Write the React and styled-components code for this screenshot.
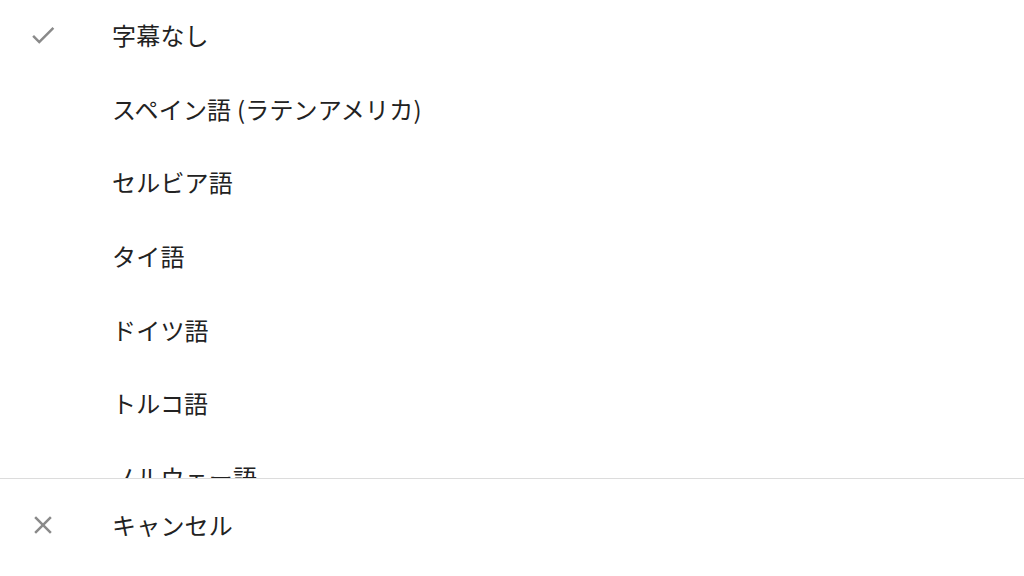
import styled, { createGlobalStyle } from "styled-components";

const Global = createGlobalStyle`
  html, body { margin: 0; padding: 0; background: #fff; }
  body {
    font-family: "Noto Sans CJK JP", "Noto Sans", sans-serif;
    color: #222;
  }
`;

const Sheet = styled.div`
  width: 1024px;
  height: 576px;
  display: flex;
  flex-direction: column;
  overflow: hidden;
`;

const List = styled.div`
  height: 478px;
  overflow: hidden;
  border-bottom: 1px solid #dcdcdc;
  flex-shrink: 0;
`;

const Row = styled.div`
  height: 73.7px;
  box-sizing: border-box;
  padding-bottom: 4px;
  display: flex;
  align-items: center;
  font-size: 24px;
  line-height: 1;
`;

const IconCell = styled.div`
  width: 112px;
  padding-left: 28px;
  box-sizing: border-box;
  display: flex;
  align-items: center;
  color: #8a8a8a;
`;

const Label = styled.span`
  white-space: nowrap;
  letter-spacing: 0.2px;
`;

const Footer = styled(Row)`
  flex: 1;
  height: auto;
  padding-bottom: 5px;
`;

const Check = () => (
  <svg width="30" height="30" viewBox="0 0 24 24">
    <path d="M9 16.2 4.8 12l-1.4 1.4L9 19 21 7l-1.4-1.4z" fill="currentColor" />
  </svg>
);

const Close = () => (
  <svg width="30" height="30" viewBox="0 0 24 24">
    <path
      d="M19 6.41 17.59 5 12 10.59 6.41 5 5 6.41 10.59 12 5 17.59 6.41 19 12 13.41 17.59 19 19 17.59 13.41 12z"
      fill="currentColor"
    />
  </svg>
);

const items = [
  "字幕なし",
  "スペイン語 (ラテンアメリカ)",
  "セルビア語",
  "タイ語",
  "ドイツ語",
  "トルコ語",
  "ノルウェー語",
];

export default function App() {
  return (
    <>
      <Global />
      <Sheet>
        <List>
          {items.map((t, i) => (
            <Row key={t}>
              <IconCell>{i === 0 && <Check />}</IconCell>
              <Label>{t}</Label>
            </Row>
          ))}
        </List>
        <Footer>
          <IconCell>
            <Close />
          </IconCell>
          <Label>キャンセル</Label>
        </Footer>
      </Sheet>
    </>
  );
}
